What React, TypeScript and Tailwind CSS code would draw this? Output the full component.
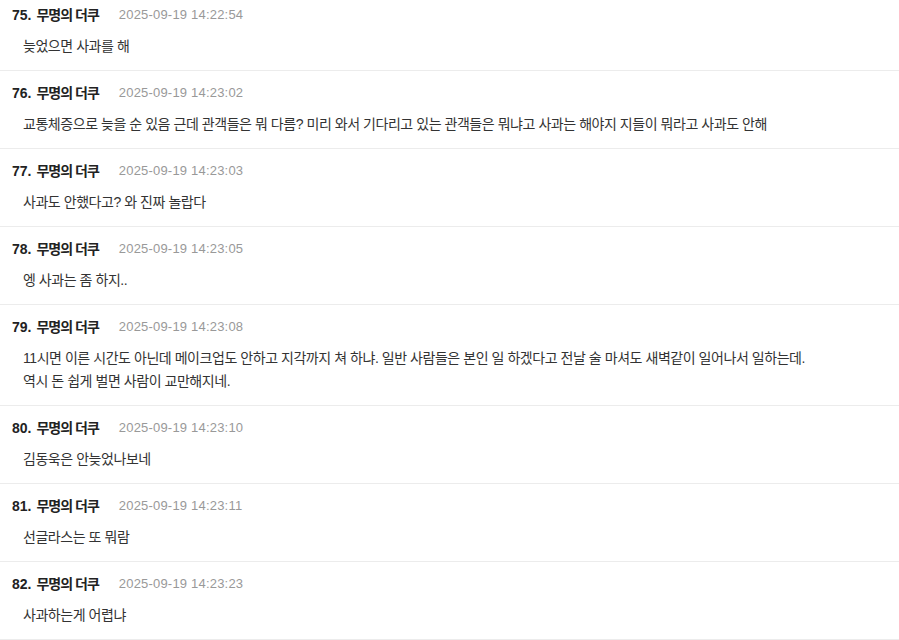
import React from "react";

type Item = { no: number; time: string; lines: string[] };

const items: Item[] = [
  { no: 75, time: "2025-09-19 14:22:54", lines: ["늦었으면 사과를 해"] },
  {
    no: 76,
    time: "2025-09-19 14:23:02",
    lines: [
      "교통체증으로 늦을 순 있음 근데 관객들은 뭐 다름? 미리 와서 기다리고 있는 관객들은 뭐냐고 사과는 해야지 지들이 뭐라고 사과도 안해",
    ],
  },
  { no: 77, time: "2025-09-19 14:23:03", lines: ["사과도 안했다고? 와 진짜 놀랍다"] },
  { no: 78, time: "2025-09-19 14:23:05", lines: ["엥 사과는 좀 하지.."] },
  {
    no: 79,
    time: "2025-09-19 14:23:08",
    lines: [
      "11시면 이른 시간도 아닌데 메이크업도 안하고 지각까지 쳐 하냐. 일반 사람들은 본인 일 하겠다고 전날 술 마셔도 새벽같이 일어나서 일하는데.",
      "역시 돈 쉽게 벌면 사람이 교만해지네.",
    ],
  },
  { no: 80, time: "2025-09-19 14:23:10", lines: ["김동욱은 안늦었나보네"] },
  { no: 81, time: "2025-09-19 14:23:11", lines: ["선글라스는 또 뭐람"] },
  { no: 82, time: "2025-09-19 14:23:23", lines: ["사과하는게 어렵냐"] },
];

export default function App() {
  return (
    <div
      className="w-[899px] h-[640px] overflow-hidden bg-white"
      style={{ fontFamily: '"Liberation Sans", "Noto Sans CJK KR", sans-serif' }}
    >
      <div className="-mt-[7px]">
        {items.map((it) => (
          <div key={it.no} className="border-b border-[#ececec] pt-[12px] pb-[12px]">
            <div className="flex items-center h-5 pl-3">
              <span className="text-[14px] font-bold text-[#222]">{it.no}.</span>
              <span className="ml-[5px] text-[14px] font-bold text-[#222] tracking-[-1px]">무명의 더쿠</span>
              <span className="ml-[20px] text-[13px] text-[#999] tracking-[0.2px]">{it.time}</span>
            </div>
            <div className="mt-[10px] pl-[23px] text-[14px] leading-[23px] text-[#333] tracking-[-0.45px]">
              {it.lines.map((l, i) => (
                <div key={i}>{l}</div>
              ))}
            </div>
          </div>
        ))}
      </div>
    </div>
  );
}
